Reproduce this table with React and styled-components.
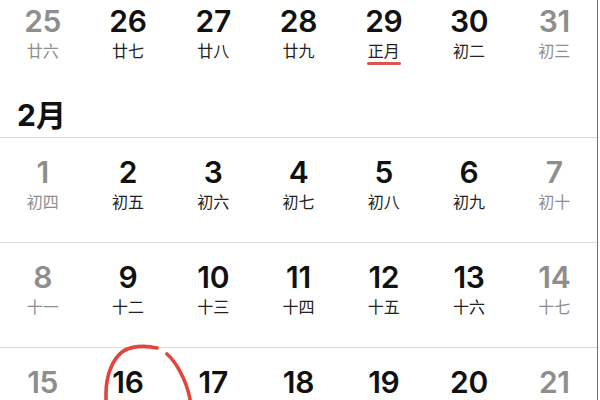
import styled, { createGlobalStyle } from "styled-components";

const GlobalStyle = createGlobalStyle`
  html, body {
    margin: 0;
    padding: 0;
    background: #ffffff;
    overflow: hidden;
  }
  body {
    font-family: "Inter", "Noto Sans CJK SC", sans-serif;
  }
`;

const Page = styled.div`
  width: 597px;
  height: 400px;
  border-right: 1px solid #6f6f6f;
  overflow: hidden;
  background: #fff;
`;

const Week = styled.div`
  display: grid;
  grid-template-columns: repeat(7, 1fr);
  height: ${(p) => (p.$first ? "93px" : "105px")};
  padding-top: ${(p) => (p.$first ? "3px" : "16px")};
  box-sizing: border-box;
  border-top: ${(p) => (p.$first ? "none" : "1px solid #dcdcdc")};
`;

const MonthTitle = styled.div`
  height: 44px;
  padding-left: 17px;
  box-sizing: border-box;
  font-family: "Inter", "Noto Sans CJK SC", sans-serif;
  font-weight: 700;
  font-size: 30px;
  line-height: 44px;
  color: #111;
`;

const Cell = styled.div`
  position: relative;
  display: flex;
  flex-direction: column;
  align-items: center;
`;

const Num = styled.div`
  font-family: "Inter", sans-serif;
  font-weight: 600;
  font-size: 30px;
  line-height: 36px;
  letter-spacing: -0.3px;
  color: ${(p) => (p.$muted ? "#8e8e8e" : "#111")};
`;

const Lunar = styled.div`
  font-family: "Noto Sans CJK SC", sans-serif;
  font-size: 16px;
  line-height: 22px;
  color: ${(p) => (p.$muted ? "#8e8e8e" : "#222")};
`;

const Underline = styled.div`
  width: 34px;
  height: 3px;
  margin-top: 1px;
  border-radius: 2px;
  background: #d9534f;
`;

const Scribble = styled.svg`
  position: absolute;
  left: 19px;
  top: -20px;
  width: 92px;
  height: 110px;
  overflow: visible;
  pointer-events: none;
`;

const weeks = [
  [
    ["25", "廿六"],
    ["26", "廿七"],
    ["27", "廿八"],
    ["28", "廿九"],
    ["29", "正月", "mark"],
    ["30", "初二"],
    ["31", "初三"],
  ],
  "2月",
  [
    ["1", "初四"],
    ["2", "初五"],
    ["3", "初六"],
    ["4", "初七"],
    ["5", "初八"],
    ["6", "初九"],
    ["7", "初十"],
  ],
  [
    ["8", "十一"],
    ["9", "十二"],
    ["10", "十三"],
    ["11", "十四"],
    ["12", "十五"],
    ["13", "十六"],
    ["14", "十七"],
  ],
  [
    ["15", "十八"],
    ["16", "十九", "circle"],
    ["17", "二十"],
    ["18", "廿一"],
    ["19", "廿二"],
    ["20", "廿三"],
    ["21", "廿四"],
  ],
];

function Day({ num, lunar, extra, muted }) {
  return (
    <Cell>
      <Num $muted={muted}>{num}</Num>
      <Lunar $muted={muted}>{lunar}</Lunar>
      {extra === "mark" && <Underline />}
      {extra === "circle" && (
        <Scribble viewBox="0 0 92 110">
          <path
            d="M53 4 C40 1, 26 2, 18 8 C8 16, 2 32, 2 50 L2 75"
            fill="none"
            stroke="#e2453c"
            strokeWidth="3.6"
            strokeLinecap="round"
          />
          <path
            d="M63 10 C72 18, 82 35, 86 55 L88 80"
            fill="none"
            stroke="#e2453c"
            strokeWidth="3.6"
            strokeLinecap="round"
          />
        </Scribble>
      )}
    </Cell>
  );
}

export default function App() {
  return (
    <>
      <GlobalStyle />
      <Page>
        {weeks.map((w, i) =>
          typeof w === "string" ? (
            <MonthTitle key={i}>{w}</MonthTitle>
          ) : (
            <Week key={i} $first={i === 0}>
              {w.map(([num, lunar, extra], j) => (
                <Day
                  key={num}
                  num={num}
                  lunar={lunar}
                  extra={extra}
                  muted={j === 0 || j === 6}
                />
              ))}
            </Week>
          )
        )}
      </Page>
    </>
  );
}
